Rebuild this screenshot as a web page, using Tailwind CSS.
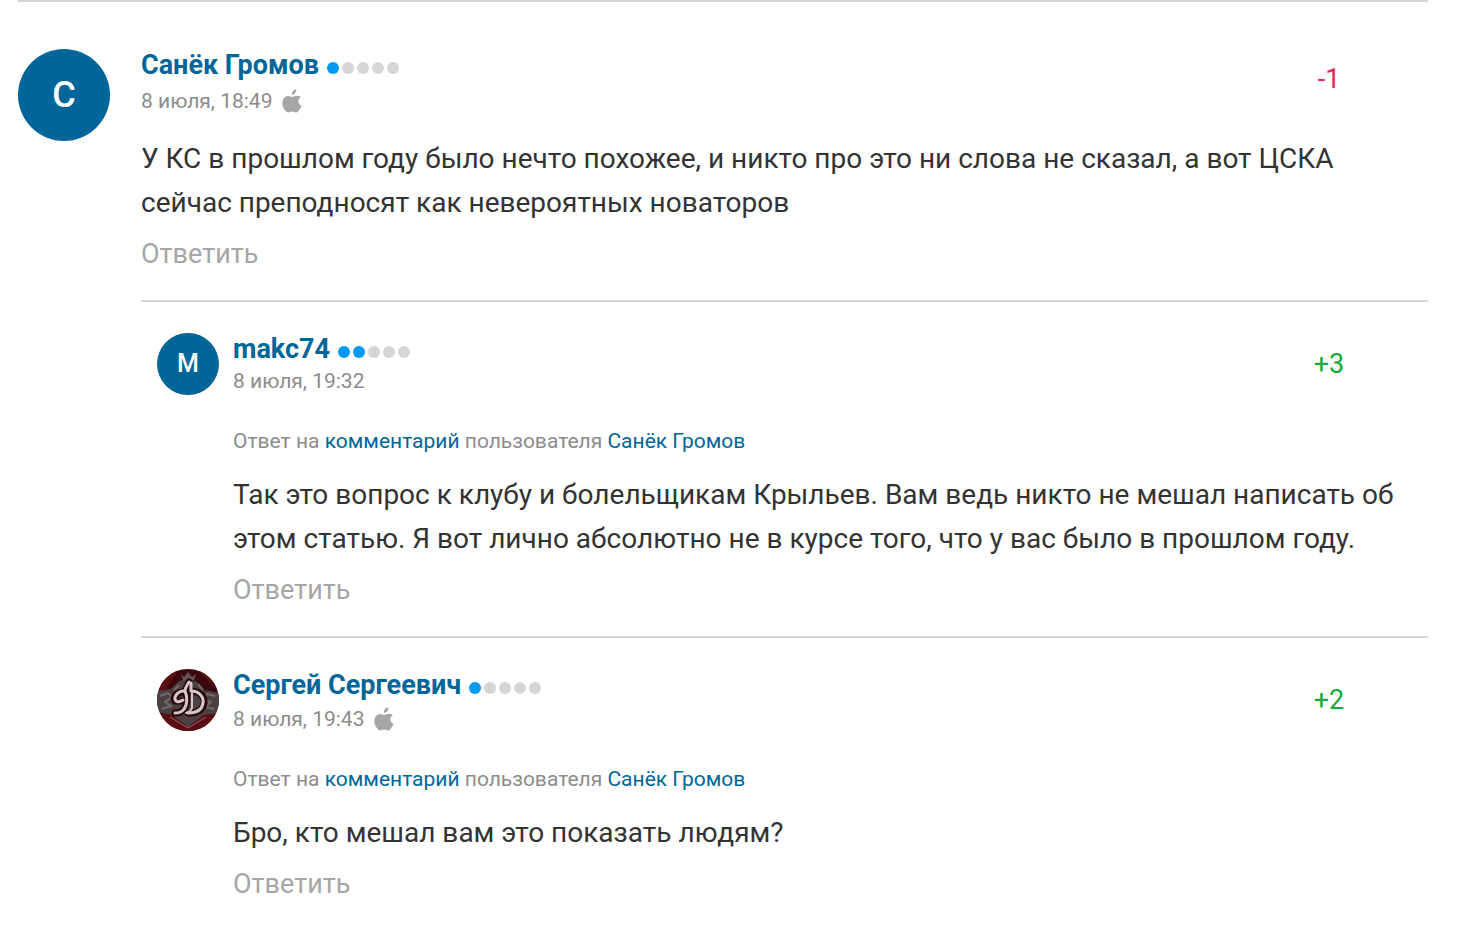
<!DOCTYPE html>
<html lang="ru">
<head>
  <meta charset="UTF-8" />
  <meta name="viewport" content="width=device-width, initial-scale=1.0" />
  <title>Комментарии</title>
  <script src="https://cdn.jsdelivr.net/npm/@tailwindcss/browser@4"></script>
</head>
<body class="bg-white font-[Roboto,sans-serif] text-[#333]">
  <svg class="hidden">
    <symbol id="apple" viewBox="0 0 20 24">
      <path d="M14.300 0.300c.2 1.500-.4 2.900-1.200 3.900-.8 1-2.100 1.700-3.300 1.600-.2-1.400.5-2.800 1.200-3.700C11.900 1.100 13.300.4 14.300.3zM18.800 8.200c-1.500.9-2.400 2.300-2.400 4.100 0 2.100 1.200 3.700 3.100 4.500-.4 1.300-1 2.500-1.800 3.700-1.100 1.600-2.200 2.900-3.700 2.900-1.600 0-2-.9-3.900-.9-1.800 0-2.400.9-3.900.9-1.600 0-2.800-1.500-3.900-3.100C.2 17.200-.3 12.600 1.400 9.800 2.500 8 4.200 6.900 6 6.900c1.700 0 2.900 1 4.200 1 1.300 0 2.400-1.100 4.500-1.100 1.600 0 3.100.5 4.100 1.400z" fill="currentColor" />
    </symbol>
  </svg>

  <main class="ml-[18px] mr-8 border-t-2 border-[#d6d6d6] pt-[47px]">
    <article class="flex gap-[31px]">
      <div class="flex size-[92px] shrink-0 items-center justify-center rounded-full bg-[#006699] text-[36px] font-medium text-white">С</div>
      <div class="min-w-0 flex-1">
        <header class="flex justify-between">
          <div>
            <div class="flex items-center gap-2">
              <a href="#" class="text-[27px] leading-8 font-bold text-[#006699]">Санёк Громов</a>
              <div class="flex gap-[3px] pt-[6px]">
                <span class="size-3 rounded-full bg-[#0099f0]"></span>
                <span class="size-3 rounded-full bg-[#d6d6d6]"></span>
                <span class="size-3 rounded-full bg-[#d6d6d6]"></span>
                <span class="size-3 rounded-full bg-[#d6d6d6]"></span>
                <span class="size-3 rounded-full bg-[#d6d6d6]"></span>
              </div>
            </div>
            <div class="mt-2 flex items-center gap-[10px] text-[21px] leading-6 text-[#8c8c8c]">
              <time>8 июля, 18:49</time>
              <svg class="h-6 w-5 text-[#a6a6a6]"><use href="#apple" /></svg>
            </div>
          </div>
          <div class="w-[198px] text-center text-[27px] leading-[60px] text-[#e6265c]">-1</div>
        </header>
        <p class="mt-6 text-[28px] leading-[44px]">У КС в прошлом году было нечто похожее, и никто про это ни слова не сказал, а вот ЦСКА сейчас преподносят как невероятных новаторов</p>
        <button class="mt-[13px] block text-[27px] leading-8 text-[#a6a6a6]">Ответить</button>
      </div>
    </article>

    <section class="ml-[123px]">
      <article class="mt-[30px] flex gap-[14px] border-t-2 border-[#d6d6d6] pt-[31px] pl-4">
        <div class="flex size-[62px] shrink-0 items-center justify-center rounded-full bg-[#006699] text-[25px] font-medium text-white">M</div>
        <div class="min-w-0 flex-1">
          <header class="flex justify-between">
            <div>
              <div class="flex items-center gap-2">
                <a href="#" class="text-[27px] leading-8 font-bold text-[#006699]">makc74</a>
                <div class="flex gap-[3px] pt-[6px]">
                  <span class="size-3 rounded-full bg-[#0099f0]"></span>
                  <span class="size-3 rounded-full bg-[#0099f0]"></span>
                  <span class="size-3 rounded-full bg-[#d6d6d6]"></span>
                  <span class="size-3 rounded-full bg-[#d6d6d6]"></span>
                  <span class="size-3 rounded-full bg-[#d6d6d6]"></span>
                </div>
              </div>
              <div class="mt-1 text-[21px] leading-6 text-[#8c8c8c]"><time>8 июля, 19:32</time></div>
            </div>
            <div class="w-[198px] text-center text-[27px] leading-[62px] text-[#14ab3c]">+3</div>
          </header>
          <div class="mt-[34px] text-[21px] leading-6 text-[#8c8c8c]">Ответ на <a href="#" class="text-[#006699]">комментарий</a> пользователя <a href="#" class="text-[#006699]">Санёк Громов</a></div>
          <p class="mt-5 text-[28px] leading-[44px]">Так это вопрос к клубу и болельщикам Крыльев. Вам ведь никто не мешал написать об этом статью. Я вот лично абсолютно не в курсе того, что у вас было в прошлом году.</p>
          <button class="mt-[13px] block text-[27px] leading-8 text-[#a6a6a6]">Ответить</button>
        </div>
      </article>

      <article class="mt-[30px] flex gap-[14px] border-t-2 border-[#d6d6d6] pt-[31px] pl-4">
        <svg class="size-[62px] shrink-0 rounded-full" viewBox="0 0 62 62" role="img" aria-label="Сергей Сергеевич">
          <rect width="62" height="62" fill="#3a080c" />
          <path d="M0 0h22L8 22H0zM42 2l20 20V8L50 0zM0 44l14 1 17 13 17-13 14-1v18H0z" fill="#5c0d13" />
          <path d="M0 22l14-2 8-8 9-3 9 4 7 8 15 3v20l-15 2-16 12-16-12-15-3z" fill="#4b4142" />
          <path d="M3 27l8-3 4 4-7 5 6 4-9 3M58 27l-8-2-3 5 7 3-6 5 9 2M17 21l5-5M41 15l5 6" fill="none" stroke="#746869" stroke-width="2" />
          <path d="M24 5l3 3 4-5 4 5 4-3-2 6H26z" fill="#655154" />
          <path d="M13 48l18 11 18-11" fill="none" stroke="#926c6e" />
          <g fill="none" stroke="#29090d" stroke-width="7" stroke-linecap="round" stroke-linejoin="round">
            <path d="M32 13l-4 9c3 7 2 14-1 18-2 3-5 4-9 4M27 23c-8 0-12 6-9 9h8M34 22c9 0 14 6 13 12-1 7-8 11-16 10" />
          </g>
          <g fill="none" stroke="#d4c7cb" stroke-linecap="round" stroke-linejoin="round">
            <path d="M32 13c-2 3-4 6-4 9 3 7 2 14-1 18-2 3-5 4-9 4" stroke-width="3" />
            <path d="M27 22c-7 0-11 7-8 10 2 2 5 0 7-1" stroke-width="3" />
            <path d="M34 14v8c8 0 13 6 12 12-1 7-7 10-15 10" stroke-width="3" />
            <path d="M35 24v14c0 3-3 5-6 6" stroke-width="2" />
          </g>
        </svg>
        <div class="min-w-0 flex-1">
          <header class="flex justify-between">
            <div>
              <div class="flex items-center gap-2">
                <a href="#" class="text-[27px] leading-8 font-bold text-[#006699]">Сергей Сергеевич</a>
                <div class="flex gap-[3px] pt-[6px]">
                  <span class="size-3 rounded-full bg-[#0099f0]"></span>
                  <span class="size-3 rounded-full bg-[#d6d6d6]"></span>
                  <span class="size-3 rounded-full bg-[#d6d6d6]"></span>
                  <span class="size-3 rounded-full bg-[#d6d6d6]"></span>
                  <span class="size-3 rounded-full bg-[#d6d6d6]"></span>
                </div>
              </div>
              <div class="mt-[6px] flex items-center gap-[10px] text-[21px] leading-6 text-[#8c8c8c]">
                <time>8 июля, 19:43</time>
                <svg class="h-6 w-5 text-[#a6a6a6]"><use href="#apple" /></svg>
              </div>
            </div>
            <div class="w-[198px] text-center text-[27px] leading-[62px] text-[#14ab3c]">+2</div>
          </header>
          <div class="mt-9 text-[21px] leading-6 text-[#8c8c8c]">Ответ на <a href="#" class="text-[#006699]">комментарий</a> пользователя <a href="#" class="text-[#006699]">Санёк Громов</a></div>
          <p class="mt-5 text-[28px] leading-[44px]">Бро, кто мешал вам это показать людям?</p>
          <button class="mt-[13px] block text-[27px] leading-8 text-[#a6a6a6]">Ответить</button>
        </div>
      </article>
    </section>
  </main>
</body>
</html>
